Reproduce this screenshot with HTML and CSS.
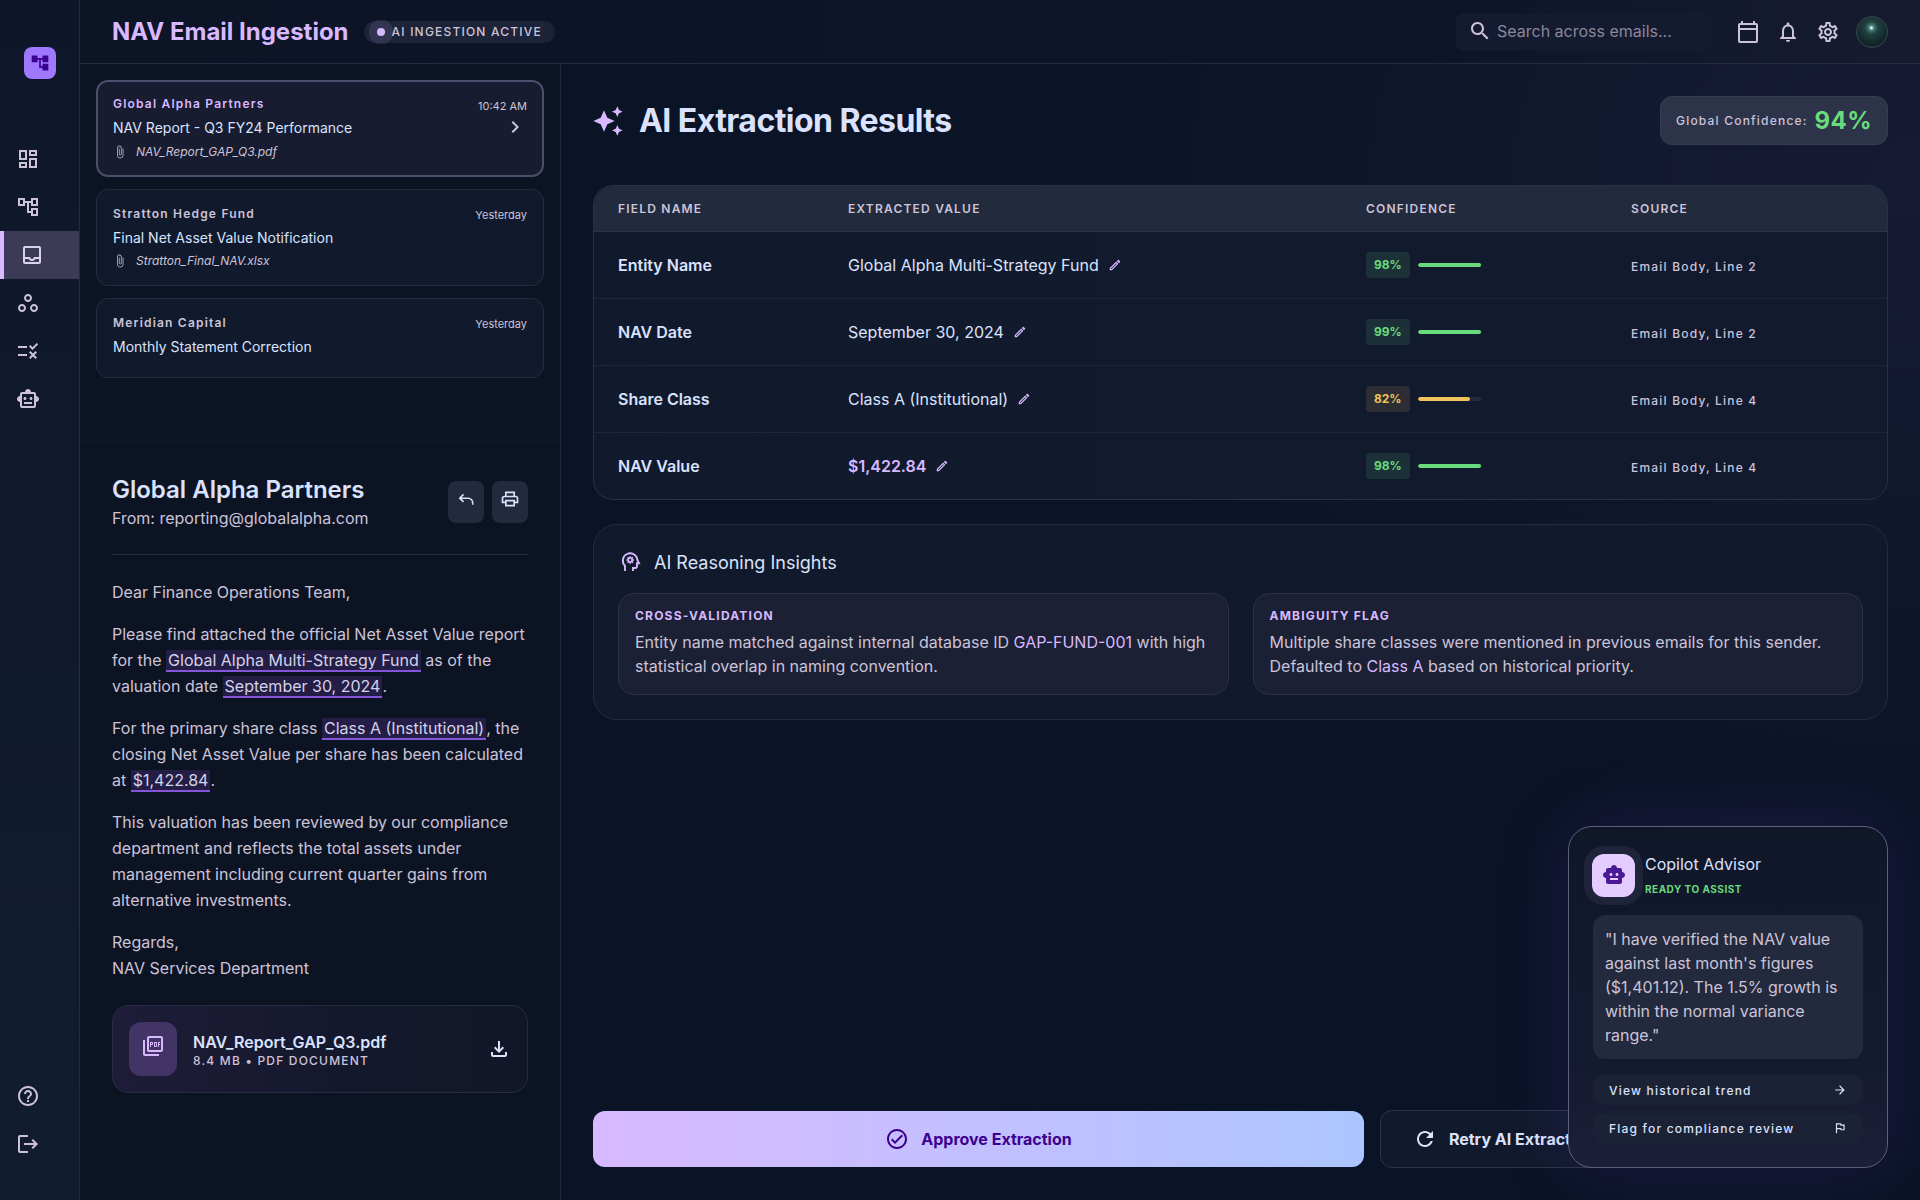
FILE: index.html
```html
<!DOCTYPE html>
<html lang="en">
<head>
<meta charset="utf-8">
<title>NAV Email Ingestion</title>
<link rel="stylesheet" href="styles.css">
</head>
<body>
<div class="app">
  <aside class="sidebar">
    <div class="logo"><svg class="ic-20" viewBox="0 0 24 24"><path d="M22 11V3h-7v3H9V3H2v8h7V8h2v10h4v3h7v-8h-7v3h-2V8h2v3z"/></svg></div>
    <nav class="nav">
      <a class="nav-item"><svg class="ic-24" viewBox="0 0 24 24"><path d="M19 5v2h-4V5h4M9 5v6H5V5h4m10 8v6h-4v-6h4M9 17v2H5v-2h4M21 3h-8v6h8V3zM11 3H3v10h8V3zm10 8h-8v10h8V11zm-10 4H3v6h8v-6z"/></svg></a>
      <a class="nav-item"><svg class="ic-24" viewBox="0 0 24 24"><path d="M22 11V3h-7v3H9V3H2v8h7V8h2v10h4v3h7v-8h-7v3h-2V8h2v3h7zM7 9H4V5h3v4zm10 6h3v4h-3v-4zm0-10h3v4h-3V5z"/></svg></a>
      <a class="nav-item active"><svg class="ic-24" viewBox="0 0 24 24"><path d="M19 3H5c-1.1 0-2 .9-2 2v14c0 1.1.9 2 2 2h14c1.1 0 2-.9 2-2V5c0-1.1-.9-2-2-2zm0 16H5v-3h3.56c.69 1.19 1.97 2 3.45 2s2.75-.81 3.45-2H19v3zm0-5h-4.99c0 1.1-.9 2-2 2s-2-.9-2-2H5V5h14v9z"/></svg></a>
      <a class="nav-item"><svg class="ic-24" viewBox="0 0 24 24"><path d="M6 13c-2.2 0-4 1.8-4 4s1.8 4 4 4 4-1.8 4-4-1.8-4-4-4zm0 6c-1.1 0-2-.9-2-2s.9-2 2-2 2 .9 2 2-.9 2-2 2zm6-16C9.8 3 8 4.8 8 7s1.8 4 4 4 4-1.8 4-4-1.8-4-4-4zm0 6c-1.1 0-2-.9-2-2s.9-2 2-2 2 .9 2 2-.9 2-2 2zm6 4c-2.2 0-4 1.8-4 4s1.8 4 4 4 4-1.8 4-4-1.8-4-4-4zm0 6c-1.1 0-2-.9-2-2s.9-2 2-2 2 .9 2 2-.9 2-2 2z"/></svg></a>
      <a class="nav-item"><svg class="ic-24" viewBox="0 0 24 24"><path d="M16.54 11L13 7.46l1.41-1.41 2.12 2.12 4.24-4.24 1.41 1.41L16.54 11zM11 7H2v2h9V7zm10 6.41L19.59 12 17 14.59 14.41 12 13 13.41 15.59 16 13 18.59 14.41 20 17 17.41 19.59 20 21 18.59 18.41 16 21 13.41zM11 15H2v2h9v-2z"/></svg></a>
      <a class="nav-item"><svg class="ic-24" viewBox="0 0 24 24"><path d="M20 9V7c0-1.1-.9-2-2-2h-3c0-1.66-1.34-3-3-3S9 3.34 9 5H6c-1.1 0-2 .9-2 2v2c-1.66 0-3 1.34-3 3s1.34 3 3 3v4c0 1.1.9 2 2 2h12c1.1 0 2-.9 2-2v-4c1.66 0 3-1.34 3-3s-1.34-3-3-3zm-2 10H6V7h12v12zm-9-6c-.83 0-1.5-.67-1.5-1.5S8.17 10 9 10s1.5.67 1.5 1.5S9.83 13 9 13zm7.5-1.5c0 .83-.67 1.5-1.5 1.5s-1.5-.67-1.5-1.5.67-1.5 1.5-1.5 1.5.67 1.5 1.5zM8 15h8v2H8v-2z"/></svg></a>
    </nav>
    <div class="nav nav-foot">
      <a class="nav-item"><svg class="ic-24" viewBox="0 0 24 24"><path d="M11 18h2v-2h-2v2zm1-16C6.48 2 2 6.48 2 12s4.48 10 10 10 10-4.48 10-10S17.52 2 12 2zm0 18c-4.41 0-8-3.59-8-8s3.59-8 8-8 8 3.59 8 8-3.59 8-8 8zm0-14c-2.21 0-4 1.79-4 4h2c0-1.1.9-2 2-2s2 .9 2 2c0 2-3 1.75-3 5h2c0-2.25 3-2.5 3-5 0-2.21-1.79-4-4-4z"/></svg></a>
      <a class="nav-item"><svg class="ic-24" viewBox="0 0 24 24"><path d="M17 7l-1.41 1.41L18.17 11H8v2h10.17l-2.58 2.58L17 17l5-5zM4 5h8V3H4c-1.1 0-2 .9-2 2v14c0 1.1.9 2 2 2h8v-2H4V5z"/></svg></a>
    </div>
  </aside>

  <div class="shell">
    <header class="topbar">
      <h1 class="app-title">NAV Email Ingestion</h1>
      <div class="status-pill"><span class="status-dot"></span>AI INGESTION ACTIVE</div>
      <div class="top-right">
        <div class="search">
          <svg class="ic-24 ic-muted" viewBox="0 0 24 24"><path d="M15.5 14h-.79l-.28-.27C15.41 12.59 16 11.11 16 9.5 16 5.91 13.09 3 9.5 3S3 5.91 3 9.5 5.91 16 9.5 16c1.61 0 3.09-.59 4.23-1.57l.27.28v.79l5 4.99L20.49 19l-4.99-5zm-6 0C7.01 14 5 11.99 5 9.5S7.01 5 9.5 5 14 7.01 14 9.5 11.99 14 9.5 14z"/></svg>
          <span>Search across emails...</span>
        </div>
        <svg class="ic-24 ic-muted" viewBox="0 0 24 24"><path d="M20 3h-1V1h-2v2H7V1H5v2H4c-1.1 0-2 .9-2 2v16c0 1.1.9 2 2 2h16c1.1 0 2-.9 2-2V5c0-1.1-.9-2-2-2zm0 18H4V10h16v11zm0-13H4V5h16v3z"/></svg>
        <svg class="ic-24 ic-muted" viewBox="0 0 24 24"><path d="M12 22c1.1 0 2-.9 2-2h-4c0 1.1.9 2 2 2zm6-6v-5c0-3.07-1.63-5.64-4.5-6.32V4c0-.83-.67-1.5-1.5-1.5s-1.5.67-1.5 1.5v.68C7.64 5.36 6 7.92 6 11v5l-2 2v1h16v-1l-2-2zm-2 1H8v-6c0-2.48 1.51-4.5 4-4.5s4 2.02 4 4.5v6z"/></svg>
        <svg class="ic-24 ic-muted" viewBox="0 0 24 24"><path d="M19.43 12.98c.04-.32.07-.64.07-.98 0-.34-.03-.66-.07-.98l2.11-1.65c.19-.15.24-.42.12-.64l-2-3.46c-.09-.16-.26-.25-.44-.25-.06 0-.12.01-.17.03l-2.49 1c-.52-.4-1.08-.73-1.69-.98l-.38-2.65C14.46 2.18 14.25 2 14 2h-4c-.25 0-.46.18-.49.42l-.38 2.65c-.61.25-1.17.59-1.69.98l-2.49-1c-.06-.02-.12-.03-.18-.03-.17 0-.34.09-.43.25l-2 3.46c-.13.22-.07.49.12.64l2.11 1.65c-.04.32-.07.65-.07.98 0 .33.03.66.07.98l-2.11 1.65c-.19.15-.24.42-.12.64l2 3.46c.09.16.26.25.44.25.06 0 .12-.01.17-.03l2.49-1c.52.4 1.08.73 1.69.98l.38 2.65c.03.24.24.42.49.42h4c.25 0 .46-.18.49-.42l.38-2.65c.61-.25 1.17-.59 1.69-.98l2.49 1c.06.02.12.03.18.03.17 0 .34-.09.43-.25l2-3.46c.12-.22.07-.49-.12-.64l-2.11-1.65zm-1.98-1.71c.04.31.05.52.05.73 0 .21-.02.43-.05.73l-.14 1.13.89.7 1.08.84-.7 1.21-1.27-.51-1.04-.42-.9.68c-.43.32-.84.56-1.25.73l-1.06.43-.16 1.13-.2 1.35h-1.4l-.19-1.35-.16-1.13-1.06-.43c-.43-.18-.83-.41-1.23-.71l-.91-.7-1.06.43-1.27.51-.7-1.21 1.08-.84.89-.7-.14-1.13c-.03-.31-.05-.54-.05-.74s.02-.43.05-.73l.14-1.13-.89-.7-1.08-.84.7-1.21 1.27.51 1.04.42.9-.68c.43-.32.84-.56 1.25-.73l1.06-.43.16-1.13.2-1.35h1.39l.19 1.35.16 1.13 1.06.43c.43.18.83.41 1.23.71l.91.7 1.06-.43 1.27-.51.7 1.21-1.07.85-.89.7.14 1.13zM12 8c-2.21 0-4 1.79-4 4s1.79 4 4 4 4-1.79 4-4-1.79-4-4-4zm0 6c-1.1 0-2-.9-2-2s.9-2 2-2 2 .9 2 2-.9 2-2 2z"/></svg>
        <div class="avatar"></div>
      </div>
    </header>

    <div class="workspace">
      <section class="left-panel">
        <div class="mail-list">
          <article class="mail-card selected">
            <div class="mail-head"><span class="sender">Global Alpha Partners</span><span class="mail-time">10:42 AM</span></div>
            <div class="subject-row"><span class="subject">NAV Report - Q3 FY24 Performance</span><svg class="ic-24 chevron" viewBox="0 0 24 24"><path d="M10 6L8.59 7.41 13.17 12l-4.58 4.59L10 18l6-6z"/></svg></div>
            <div class="mail-file"><svg class="ic-14" viewBox="0 0 24 24"><path d="M16.5 6v11.5c0 2.21-1.79 4-4 4s-4-1.79-4-4V5c0-1.38 1.12-2.5 2.5-2.5s2.5 1.12 2.5 2.5v10.5c0 .55-.45 1-1 1s-1-.45-1-1V6H10v9.5c0 1.38 1.12 2.5 2.5 2.5s2.5-1.12 2.5-2.5V5c0-2.21-1.79-4-4-4S7 2.79 7 5v12.5c0 3.04 2.46 5.5 5.5 5.5s5.5-2.46 5.5-5.5V6h-1.5z"/></svg><span>NAV_Report_GAP_Q3.pdf</span></div>
          </article>
          <article class="mail-card">
            <div class="mail-head"><span class="sender">Stratton Hedge Fund</span><span class="mail-time">Yesterday</span></div>
            <div class="subject-row"><span class="subject">Final Net Asset Value Notification</span></div>
            <div class="mail-file"><svg class="ic-14" viewBox="0 0 24 24"><path d="M16.5 6v11.5c0 2.21-1.79 4-4 4s-4-1.79-4-4V5c0-1.38 1.12-2.5 2.5-2.5s2.5 1.12 2.5 2.5v10.5c0 .55-.45 1-1 1s-1-.45-1-1V6H10v9.5c0 1.38 1.12 2.5 2.5 2.5s2.5-1.12 2.5-2.5V5c0-2.21-1.79-4-4-4S7 2.79 7 5v12.5c0 3.04 2.46 5.5 5.5 5.5s5.5-2.46 5.5-5.5V6h-1.5z"/></svg><span>Stratton_Final_NAV.xlsx</span></div>
          </article>
          <article class="mail-card">
            <div class="mail-head"><span class="sender">Meridian Capital</span><span class="mail-time">Yesterday</span></div>
            <div class="subject-row"><span class="subject">Monthly Statement Correction</span></div>
          </article>
        </div>

        <div class="mail-detail">
          <div class="detail-head">
            <div>
              <h2 class="detail-name">Global Alpha Partners</h2>
              <p class="detail-from">From: reporting@globalalpha.com</p>
            </div>
            <div class="detail-actions">
              <button class="square-btn"><svg class="ic-20" viewBox="0 0 24 24"><path class="stroke" d="M9 6.5L4.5 11 9 15.5M5 11h9.5a5.5 5.5 0 0 1 5.5 5.5V19"/></svg></button>
              <button class="square-btn"><svg class="ic-20" viewBox="0 0 24 24"><path d="M19 8h-1V3H6v5H5c-1.66 0-3 1.34-3 3v6h4v4h12v-4h4v-6c0-1.66-1.34-3-3-3zM8 5h8v3H8V5zm8 12v2H8v-4h8v2zm2-2v-2H6v2H4v-4c0-.55.45-1 1-1h14c.55 0 1 .45 1 1v4h-2z"/></svg></button>
            </div>
          </div>
          <div class="mail-body">
            <p>Dear Finance Operations Team,</p>
            <p>Please find attached the official Net Asset Value report for the <mark>Global Alpha Multi-Strategy Fund</mark> as of the valuation date <mark>September 30, 2024</mark>.</p>
            <p>For the primary share class <mark>Class A (Institutional)</mark>, the closing Net Asset Value per share has been calculated at <mark>$1,422.84</mark>.</p>
            <p>This valuation has been reviewed by our compliance department and reflects the total assets under management including current quarter gains from alternative investments.</p>
            <p>Regards,<br>NAV Services Department</p>
          </div>
          <div class="attachment">
            <div class="file-tile"><svg class="ic-24" viewBox="0 0 24 24"><path d="M20 2H8c-1.1 0-2 .9-2 2v12c0 1.1.9 2 2 2h12c1.1 0 2-.9 2-2V4c0-1.1-.9-2-2-2zm0 14H8V4h12v12zM4 6H2v14c0 1.1.9 2 2 2h14v-2H4V6zm12 6V9c0-.55-.45-1-1-1h-2v5h2c.55 0 1-.45 1-1zm-2-3h1v3h-1V9zm4 2h1v-1h-1V9h1V8h-2v5h1v-2zm-8 0h1c.55 0 1-.45 1-1V9c0-.55-.45-1-1-1H9v5h1v-2zm0-2h1v1h-1V9z"/></svg></div>
            <div class="file-meta">
              <div class="file-name">NAV_Report_GAP_Q3.pdf</div>
              <div class="file-sub">8.4 MB • PDF DOCUMENT</div>
            </div>
            <svg class="ic-24 file-dl" viewBox="0 0 24 24"><path d="M18 15v3H6v-3H4v3c0 1.1.9 2 2 2h12c1.1 0 2-.9 2-2v-3h-2zm-1-4l-1.41-1.41L13 12.17V4h-2v8.17L8.41 9.59 7 11l5 5 5-5z"/></svg>
          </div>
        </div>
      </section>

      <main class="main">
        <div class="results-head">
          <svg class="ic-32 ic-primary sparkle" viewBox="0 0 24 24"><path d="M19 9l1.25-2.75L23 5l-2.75-1.25L19 1l-1.25 2.75L15 5l2.75 1.25L19 9zm-7.5.5L9 4 6.5 9.5 1 12l5.5 2.5L9 20l2.5-5.5L17 12l-5.5-2.5zM19 15l-1.25 2.75L15 19l2.75 1.25L19 23l1.25-2.75L23 19l-2.75-1.25L19 15z"/></svg>
          <h2 class="results-title">AI Extraction Results</h2>
          <div class="global-conf"><span class="global-label">Global Confidence:</span><span class="global-val">94%</span></div>
        </div>

        <div class="table-card">
          <table class="results">
            <colgroup><col class="c1"><col class="c2"><col class="c3"><col class="c4"></colgroup>
            <thead><tr><th>Field Name</th><th>Extracted Value</th><th>Confidence</th><th>Source</th></tr></thead>
            <tbody>
              <tr>
                <td class="field">Entity Name</td>
                <td><span class="val">Global Alpha Multi-Strategy Fund<svg class="ic-14 pencil" viewBox="0 0 24 24"><path d="M3 17.25V21h3.75L17.81 9.94l-3.75-3.75L3 17.25zM5.92 19H5v-.92l9.06-9.06.92.92L5.92 19zM20.71 5.63l-2.34-2.34c-.2-.2-.45-.29-.71-.29s-.51.1-.7.29l-1.83 1.83 3.75 3.75 1.83-1.83c.39-.39.39-1.02 0-1.41z"/></svg></span></td>
                <td><div class="conf"><span class="conf-badge">98%</span><span class="bar"><span class="fill" style="width:98%"></span></span></div></td>
                <td class="src">Email Body, Line 2</td>
              </tr>
              <tr>
                <td class="field">NAV Date</td>
                <td><span class="val">September 30, 2024<svg class="ic-14 pencil" viewBox="0 0 24 24"><path d="M3 17.25V21h3.75L17.81 9.94l-3.75-3.75L3 17.25zM5.92 19H5v-.92l9.06-9.06.92.92L5.92 19zM20.71 5.63l-2.34-2.34c-.2-.2-.45-.29-.71-.29s-.51.1-.7.29l-1.83 1.83 3.75 3.75 1.83-1.83c.39-.39.39-1.02 0-1.41z"/></svg></span></td>
                <td><div class="conf"><span class="conf-badge">99%</span><span class="bar"><span class="fill" style="width:99%"></span></span></div></td>
                <td class="src">Email Body, Line 2</td>
              </tr>
              <tr>
                <td class="field">Share Class</td>
                <td><span class="val">Class A (Institutional)<svg class="ic-14 pencil" viewBox="0 0 24 24"><path d="M3 17.25V21h3.75L17.81 9.94l-3.75-3.75L3 17.25zM5.92 19H5v-.92l9.06-9.06.92.92L5.92 19zM20.71 5.63l-2.34-2.34c-.2-.2-.45-.29-.71-.29s-.51.1-.7.29l-1.83 1.83 3.75 3.75 1.83-1.83c.39-.39.39-1.02 0-1.41z"/></svg></span></td>
                <td><div class="conf warn"><span class="conf-badge">82%</span><span class="bar"><span class="fill" style="width:82%"></span></span></div></td>
                <td class="src">Email Body, Line 4</td>
              </tr>
              <tr>
                <td class="field">NAV Value</td>
                <td><span class="val val-strong">$1,422.84<svg class="ic-14 pencil" viewBox="0 0 24 24"><path d="M3 17.25V21h3.75L17.81 9.94l-3.75-3.75L3 17.25zM5.92 19H5v-.92l9.06-9.06.92.92L5.92 19zM20.71 5.63l-2.34-2.34c-.2-.2-.45-.29-.71-.29s-.51.1-.7.29l-1.83 1.83 3.75 3.75 1.83-1.83c.39-.39.39-1.02 0-1.41z"/></svg></span></td>
                <td><div class="conf"><span class="conf-badge">98%</span><span class="bar"><span class="fill" style="width:98%"></span></span></div></td>
                <td class="src">Email Body, Line 4</td>
              </tr>
            </tbody>
          </table>
        </div>

        <section class="insights">
          <h3 class="insights-title">
            <svg class="ic-24 ic-primary" viewBox="0 0 24 24"><path class="stroke" d="M7 21v-5.2A7.3 7.3 0 1 1 19.4 10l1.6 3.2h-2v3a1.8 1.8 0 0 1-1.8 1.8H15v3"/><circle class="stroke gear" cx="12.2" cy="10" r="1.9"/><path class="stroke gear" d="M12.2 6.2v1.9M12.2 11.9v1.9M8.4 10h1.9M14.1 10H16M9.5 7.3l1.3 1.3M13.6 11.4l1.3 1.3M9.5 12.7l1.3-1.3M13.6 8.6l1.3-1.3"/></svg>
            AI Reasoning Insights
          </h3>
          <div class="insight-grid">
            <div class="insight">
              <div class="insight-label">Cross-Validation</div>
              <p class="insight-text">Entity name matched against internal database ID <span class="accent">GAP-FUND-001</span> with high statistical overlap in naming convention.</p>
            </div>
            <div class="insight">
              <div class="insight-label">Ambiguity Flag</div>
              <p class="insight-text">Multiple share classes were mentioned in previous emails for this sender. Defaulted to <span class="accent">Class A</span> based on historical priority.</p>
            </div>
          </div>
        </section>

        <div class="actions">
          <button class="btn-approve"><svg class="ic-24" viewBox="0 0 24 24"><path d="M12 2C6.48 2 2 6.48 2 12s4.48 10 10 10 10-4.48 10-10S17.52 2 12 2zm0 18c-4.41 0-8-3.59-8-8s3.59-8 8-8 8 3.59 8 8-3.59 8-8 8zm4.59-12.42L10 14.17l-2.59-2.58L6 13l4 4 8-8z"/></svg>Approve Extraction</button>
          <button class="btn-retry"><svg class="ic-24" viewBox="0 0 24 24"><path d="M17.65 6.35C16.2 4.9 14.21 4 12 4c-4.42 0-7.99 3.58-7.99 8s3.57 8 7.99 8c3.73 0 6.84-2.55 7.73-6h-2.08c-.82 2.33-3.04 4-5.65 4-3.31 0-6-2.69-6-6s2.69-6 6-6c1.66 0 3.14.69 4.22 1.78L13 11h7V4l-2.35 2.35z"/></svg>Retry AI Extraction</button>
        </div>

        <aside class="copilot">
          <div class="copilot-head">
            <div class="copilot-icon"><svg class="ic-24" viewBox="0 0 24 24"><path d="M20 9V7c0-1.1-.9-2-2-2h-3c0-1.66-1.34-3-3-3S9 3.34 9 5H6c-1.1 0-2 .9-2 2v2c-1.66 0-3 1.34-3 3s1.34 3 3 3v4c0 1.1.9 2 2 2h12c1.1 0 2-.9 2-2v-4c1.66 0 3-1.34 3-3s-1.34-3-3-3zM7.5 11.5c0-.83.67-1.5 1.5-1.5s1.5.67 1.5 1.5S9.83 13 9 13s-1.5-.67-1.5-1.5zM16 17H8v-2h8v2zm-1-4c-.83 0-1.5-.67-1.5-1.5S14.17 10 15 10s1.5.67 1.5 1.5S15.83 13 15 13z"/></svg></div>
            <div>
              <div class="copilot-name">Copilot Advisor</div>
              <div class="copilot-state">Ready to assist</div>
            </div>
          </div>
          <div class="copilot-quote">"I have verified the NAV value against last month's figures ($1,401.12). The 1.5% growth is within the normal variance range."</div>
          <button class="copilot-btn">View historical trend<svg class="ic-14" viewBox="0 0 24 24"><path d="M12 4l-1.41 1.41L16.17 11H4v2h12.17l-5.58 5.59L12 20l8-8z"/></svg></button>
          <button class="copilot-btn">Flag for compliance review<svg class="ic-14" viewBox="0 0 24 24"><path d="M14.43 6l-.4-2H5v17h2v-7h5.6l.4 2h7V6h-5.57zM18 14h-3.35l-.4-2H7V6h5.34l.4 2H18v6z"/></svg></button>
        </aside>
      </main>
    </div>
  </div>
</div>
</body>
</html>
```

FILE: styles.css
```css
* { box-sizing: border-box; }
html, body { margin: 0; height: 100%; }
body {
  width: 1920px; height: 1200px; overflow: hidden;
  background: #0b1326; color: #dae2fd;
  font-family: Inter, "Liberation Sans", sans-serif;
}
h1, h2, h3, p { margin: 0; }
button { font-family: inherit; border: 0; cursor: pointer; }
svg { fill: currentColor; flex: none; display: block; }
.stroke { fill: none; stroke: currentColor; stroke-width: 1.9; }
.stroke.gear { stroke-width: 1.5; }
.ic-14 { width: 14px; height: 14px; }
.ic-16 { width: 16px; height: 16px; }
.ic-20 { width: 20px; height: 20px; }
.ic-24 { width: 24px; height: 24px; }
.ic-32 { width: 32px; height: 32px; }
.ic-muted { color: #ccc3d8; }
.ic-primary { color: #d8b9ff; }

.app { display: flex; width: 1920px; height: 1200px; }

/* Sidebar */
.sidebar {
  width: 80px; flex: none; display: flex; flex-direction: column;
  background: linear-gradient(180deg, #0e172a 0%, #121c31 100%);
  border-right: 1px solid #242c40;
  padding: 47px 0 32px;
}
.logo {
  width: 32px; height: 32px; border-radius: 8px; margin-left: 24px;
  background: #a078ff; color: #3c0091;
  display: flex; align-items: center; justify-content: center;
}
.nav { display: flex; flex-direction: column; }
.sidebar > .nav:nth-child(2) { margin-top: 56px; }
.nav-foot { margin-top: auto; }
.nav-item { height: 48px; padding-left: 16px; display: flex; align-items: center; color: #ccc3d8; }
.nav-item.active { background: #3b3b58; border-left: 4px solid #d8b9ff; color: #d9d2ea; }

/* Shell */
.shell { flex: 1; min-width: 0; display: flex; flex-direction: column; }
.topbar {
  height: 64px; flex: none; display: flex; align-items: center; padding: 0 32px;
  background: linear-gradient(90deg, #0c1426 0%, #0e1529 75%, #161b32 100%);
  border-bottom: 1px solid #252b40;
}
.app-title { font-size: 24px; line-height: 32px; font-weight: 700; color: #d8b9ff; }
.status-pill {
  position: relative; margin-left: 15px; height: 22px; display: flex; align-items: center;
  padding: 0 13px 0 28px; border-radius: 11px; background: #1d2338;
  font-size: 12px; font-weight: 500; letter-spacing: 1.2px; color: #ccc3d8;
}
.status-dot { position: absolute; left: 13px; top: 7px; width: 8px; height: 8px; border-radius: 50%; background: #d8b9ff; box-shadow: 0 0 0 8px rgba(216,185,255,.12); }
.top-right { margin-left: auto; display: flex; align-items: center; gap: 16px; }
.search {
  width: 256px; height: 38px; margin-right: 8px; border-radius: 8px; background: #141b30;
  display: flex; align-items: center; gap: 5px; padding: 0 12px 2px;
  font-size: 16px; color: #8b8799;
}
.avatar {
  width: 32px; height: 32px; border-radius: 50%; border: 1px solid #3a474d;
  background: radial-gradient(circle at 48% 36%, #d9f2ec 0 3%, #4a7f7b 10%, #21423f 26%, #12292b 60%, #0c1c1f 100%);
}

/* Workspace */
.workspace { flex: 1; min-height: 0; display: flex; }
.left-panel {
  width: 481px; flex: none; display: flex; flex-direction: column;
  background: #0c1424; border-right: 1px solid #1e2538;
}
.mail-list { height: 378px; flex: none; padding: 16px; display: flex; flex-direction: column; gap: 12px; border-bottom: 1px solid #10182a; }
.mail-card { padding: 16px; border: 1px solid #252c40; border-radius: 12px; background: #111a2d; }
.mail-card.selected { border: 2px solid #4b4e6c; background: #171c31; padding: 15px; }
.mail-head { display: flex; justify-content: space-between; align-items: center; height: 17px; margin-bottom: 4px; }
.sender { font-size: 12px; font-weight: 600; letter-spacing: 1.2px; color: #ccc3d8; margin-top: -2px; }
.selected .sender { color: #d8b9ff; margin-top: -4px; }
.mail-time { font-size: 11px; color: #ccc3d8; }
.subject-row { display: flex; justify-content: space-between; align-items: center; height: 20px; font-size: 14px; font-weight: 400; color: #dae2fd; margin-bottom: 5px; }
.selected .subject { margin-top: -2px; }
.chevron { margin-right: 0; color: #ccc3d8; margin-top: -4px; margin-bottom: -2px; }
.mail-file { display: flex; align-items: center; gap: 9px; height: 17px; font-size: 12px; font-style: italic; color: #ccc3d8; }
.mail-file svg { opacity: .85; }

.mail-detail { flex: 1; padding: 32px 32px 0; display: flex; flex-direction: column; }
.detail-head { display: flex; justify-content: space-between; align-items: center; padding-bottom: 24px; border-bottom: 1px solid #232b3f; }
.detail-name { font-size: 24px; line-height: 32px; font-weight: 600; color: #dae2fd; }
.detail-from { font-size: 16px; line-height: 24px; color: #ccc3d8; }
.detail-actions { display: flex; gap: 8px; }
.square-btn { width: 36px; height: 42px; padding: 8px 8px 14px; border-radius: 8px; background: #222a3d; color: #dae2fd; }
.mail-body { padding-top: 24px; font-size: 16px; line-height: 26px; color: #ccc3d8; }
.mail-body p { margin-bottom: 16px; }
mark {
  background: rgba(160,90,255,.16); color: #d3d2e8; padding: 0 2px;
  border-bottom: 2px solid #8455d8;
}
.attachment {
  margin-top: 8px; height: 88px; display: flex; align-items: center; gap: 16px; padding: 0 16px;
  border: 1px solid #252b40; border-radius: 16px;
  background: linear-gradient(90deg, #1e1c38 0%, #14182c 60%, #111729 100%);
}
.file-tile { width: 48px; height: 54px; border-radius: 12px; background: #433466; color: #d8b9ff; padding: 12px; }
.file-meta { flex: 1; min-width: 0; }
.file-name { font-size: 16px; line-height: 24px; font-weight: 600; color: #dae2fd; }
.file-sub { font-size: 12px; line-height: 14px; font-weight: 500; letter-spacing: 1.2px; color: #ccc3d8; }
.file-dl { color: #dae2fd; }

/* Main */
.main {
  position: relative; flex: 1; min-width: 0; padding: 32px; display: flex; flex-direction: column;
  background: radial-gradient(900px 700px at 100% 10%, #161b33 0%, rgba(22,27,51,0) 100%), #0b1326;
}
.results-head { display: flex; align-items: center; height: 49px; margin-bottom: 40px; }
.sparkle { margin-left: -1px; }
.results-title { margin-left: 15px; font-size: 32px; line-height: 40px; font-weight: 700; color: #dae2fd; letter-spacing: -0.55px; }
.global-conf {
  margin-left: auto; height: 49px; display: flex; align-items: center; gap: 7px; padding: 0 15px;
  border-radius: 12px; background: #2d3449; border: 1px solid #363d53;
}
.global-label { font-size: 12px; font-weight: 500; letter-spacing: 1.2px; color: #ccc3d8; }
.global-val { font-size: 24px; font-weight: 700; letter-spacing: 0.4px; color: #69db7c; }

.table-card {
  border: 1px solid #2a3146; border-radius: 20px; overflow: hidden;
  background: linear-gradient(90deg, #111a2d 0%, #131a2f 100%);
}
.results { width: 100%; border-collapse: collapse; table-layout: fixed; }
.c1 { width: 230px; } .c2 { width: 518px; } .c3 { width: 265px; }
.results th {
  height: 45px; padding: 0 0 0 24px; text-align: left; text-transform: uppercase;
  font-size: 12px; font-weight: 600; letter-spacing: 1.2px; color: #ccc3d8;
  background: #222a3d; border-bottom: 1px solid #2d3449;
}
.results td { height: 67px; padding: 0 0 0 24px; border-bottom: 1px solid #1e2639; font-size: 16px; color: #dae2fd; }
.results tbody tr:last-child td { height: 67px; border-bottom: 0; }
.results .field { font-weight: 600; }
.val { display: inline-flex; align-items: center; gap: 9px; }
.val-strong { color: #d8b9ff; font-weight: 600; }
.pencil { color: #d8b9ff; }
.conf { display: flex; align-items: center; gap: 8px; color: #69db7c; }
.conf.warn { color: #f2c25c; }
.conf-badge { padding: 5px 8px; line-height: 16px; font-size: 12px; font-weight: 700; border-radius: 4px; background: rgba(105,219,124,.12); }
.conf.warn .conf-badge { background: rgba(242,194,92,.12); }
.bar { width: 64px; height: 4px; border-radius: 2px; background: #222a3d; overflow: hidden; }
.fill { display: block; height: 100%; border-radius: 2px; background: currentColor; }
.results .src { font-size: 12px; font-weight: 500; letter-spacing: 1.2px; color: #ccc3d8; padding-top: 3px; }

.insights {
  margin-top: 24px; height: 196px; padding: 23px 24px 24px; border: 1px solid #252c40; border-radius: 24px; background: #111a2d;
}
.insights-title { display: flex; align-items: center; gap: 12px; height: 28px; font-size: 18px; font-weight: 400; color: #dae2fd; margin-bottom: 17px; }
.insight-grid { display: grid; grid-template-columns: 1fr 1fr; gap: 24px; }
.insight { height: 102px; padding: 14px 16px 16px; border: 1px solid #2a3146; border-radius: 16px; background: #1b2035; }
.insight-label { font-size: 12px; line-height: 16px; font-weight: 700; letter-spacing: 1.2px; text-transform: uppercase; color: #d8b9ff; margin-bottom: 6px; }
.insight-text { font-size: 16px; line-height: 24px; color: #ccc3d8; }
.accent { color: #d8b9ff; }

.actions { margin-top: auto; display: flex; align-items: center; gap: 16px; }
.btn-approve {
  width: 771px; height: 56px; border-radius: 12px;
  background: linear-gradient(90deg, #d8b9ff 0%, #adc6ff 100%);
  color: #3c0091; font-size: 16px; font-weight: 700;
  display: flex; align-items: center; justify-content: center; gap: 12px;
}
.btn-retry {
  width: 248px; height: 58px; border-radius: 12px; border: 1px solid #2d3449; background: #111a2d;
  color: #dae2fd; font-size: 16px; font-weight: 700;
  display: flex; align-items: center; justify-content: center; gap: 12px;
}

/* Floating copilot */
.copilot {
  position: absolute; right: 32px; bottom: 32px; width: 320px; height: 342px; padding: 24px;
  border: 1px solid #5d5f7c; border-radius: 24px;
  background: linear-gradient(180deg, #101729 0%, #141a30 70%, #1c1f38 100%);
  box-shadow: 0 0 70px rgba(110,60,200,.18);
}
.copilot-head { display: flex; align-items: center; gap: 10px; height: 48px; margin-bottom: 16px; }
.copilot-icon {
  width: 43px; height: 43px; margin-left: -1px; border-radius: 12px; background: #e4ccff; color: #4a1a96;
  display: flex; align-items: center; justify-content: center; box-shadow: 0 0 0 8px #20243b;
}
.copilot-name { font-size: 16px; line-height: 20px; font-weight: 400; color: #dae2fd; }
.copilot-state { margin-top: 8px; font-size: 10px; line-height: 14px; font-weight: 700; letter-spacing: 0.5px; text-transform: uppercase; color: #69db7c; }
.copilot-quote { padding: 12px; border-radius: 12px; background: #232a3d; font-size: 16px; line-height: 24px; color: #ccc3d8; margin-bottom: 16px; }
.copilot-btn {
  width: 100%; height: 30px; padding: 0 16px; border-radius: 10px; background: #1c2236; color: #dae2fd;
  font-size: 12px; font-weight: 500; letter-spacing: 1.2px;
  display: flex; align-items: center; justify-content: space-between;
}
.copilot-btn + .copilot-btn { margin-top: 8px; }
```
